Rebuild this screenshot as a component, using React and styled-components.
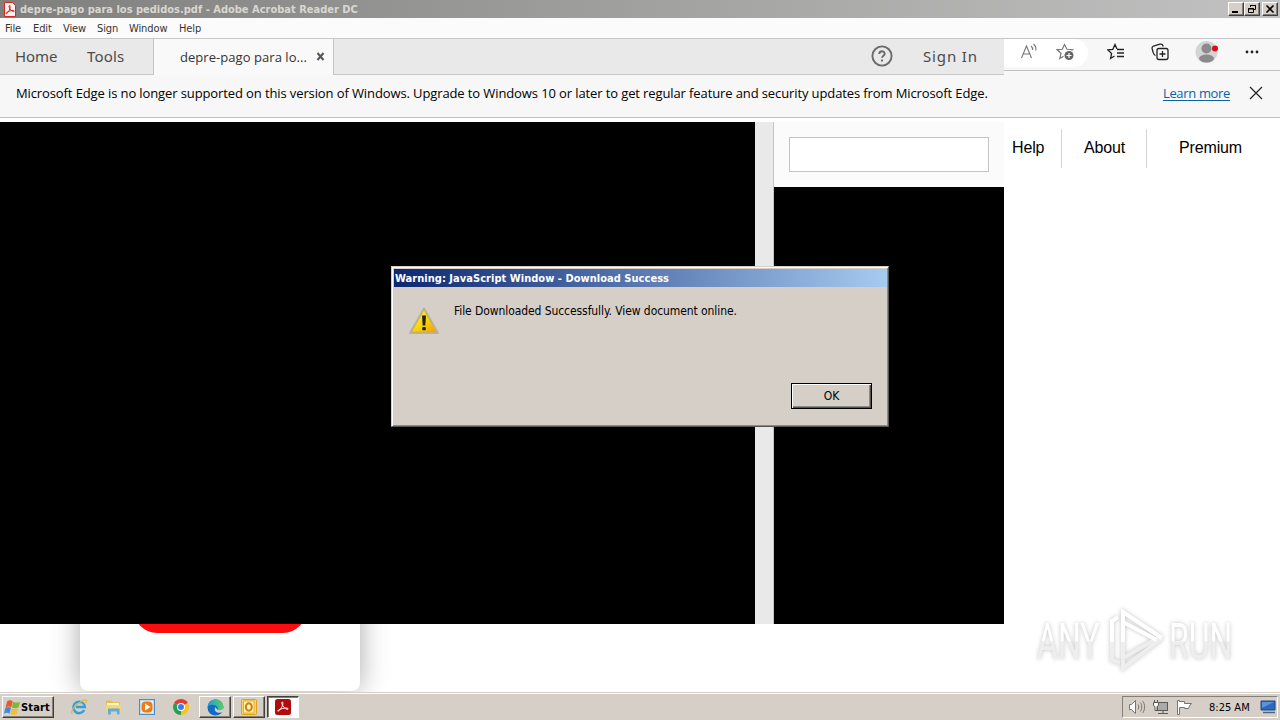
import styled, { createGlobalStyle, css } from "styled-components"

const GlobalStyle = createGlobalStyle`
    * {
        box-sizing: border-box;
    }
    body {
        margin: 0;
        overflow: hidden;
        background-color: #fff;
    }
`;

const tahoma = css`
    font-family: "DejaVu Sans Condensed", "DejaVu Sans", sans-serif;
    font-size: 11px;
`;
const segoe = css`
    font-family: "Open Sans", "Noto Sans", sans-serif;
    font-size: 13px;
`;
const raised = css`
    border: 1px solid;
    border-color: #fff #404040 #404040 #fff;
    box-shadow: inset -1px -1px #848079;
`;

const Desktop = styled.div`
    ${tahoma}
    position: relative;
    display: flex;
    flex-direction: column;
    width: 1280px;
    height: 720px;
    overflow: hidden;
    white-space: nowrap;
    color: #000;
`;

/* acrobat window */
const TitleBar = styled.header`
    display: flex;
    align-items: center;
    height: 18px;
    padding: 0 2px 0 4px;
    background: linear-gradient(90deg, #7f7f7d, #c2c2c2);
`;
const Title = styled.h1`
    flex: 1;
    margin: 0 0 0 4px;
    padding-top: 1px;
    font-size: 11px;
    line-height: 17px;
    font-weight: bold;
    color: #dad7d0;
`;
const CaptionButton = styled.button`
    ${raised}
    display: flex;
    align-items: center;
    justify-content: center;
    width: 16px;
    height: 14px;
    margin-left: ${(props) => (props.$gap ? '2px' : '0')};
    padding: 0;
    background-color: #d6cfc8;
`;
const MenuBar = styled.nav`
    display: flex;
    gap: 12px;
    height: 20px;
    padding: 1px 5px 0;
    background-color: #fbfbfb;
    line-height: 19px;
    color: #333;
`;
const MenuItem = styled.span`
    width: ${(props) => props.$width}px;
    letter-spacing: -0.1px;
`;

const Toolbars = styled.div`
    display: flex;
    align-items: flex-start;
    height: 37px;
    background-color: #f7f7f7;
`;
const AcrobatBar = styled.div`
    display: flex;
    flex: none;
    width: 1004px;
    height: 37px;
    background-color: #e9e9e9;
    border-top: 1px solid #c8c8c8;
    border-bottom: 1px solid #c8c8c8;
    font-family: "Noto Sans", sans-serif;
    font-size: 15px;
    line-height: 34px;
    color: #4b4b4b;
`;
const BarLink = styled.span`
    width: ${(props) => props.$width}px;
    padding-left: ${(props) => props.$indent}px;
    letter-spacing: ${(props) => props.$track || 0}px;
`;
const DocumentTab = styled.div`
    ${segoe}
    display: flex;
    align-items: center;
    width: 181px;
    height: 37px;
    padding: 0 0 2px 26px;
    background-color: #f9f9f9;
    border-left: 1px solid #c4c4c4;
    border-right: 1px solid #c4c4c4;
    line-height: 34px;
    color: #333;
`;
const TabName = styled.span`
    width: 136px;
    letter-spacing: 0.05px;
`;
const BarSpace = styled.div`
    flex: 1;
`;
const HelpIcon = styled.svg`
    margin-top: 6px;
`;

/* edge window behind it */
const EdgeBar = styled.div`
    display: flex;
    flex: none;
    width: 276px;
    height: 33px;
    border-top: 1px solid #c6c6c6;
    border-bottom: 1px solid #c2c2c2;
`;
const AddressEnd = styled.div`
    display: flex;
    flex: none;
    align-items: center;
    gap: 18px;
    width: 84px;
    height: 28px;
    padding: 0 0 3px 16px;
    background-color: #fff;
    border-radius: 0 14px 14px 0;
`;
const EdgeActions = styled.div`
    display: flex;
    flex: none;
    align-items: center;
    height: 25px;
    padding-left: 17px;
`;
const EdgeAction = styled.span`
    display: flex;
    justify-content: center;
    width: ${(props) => props.$width}px;
`;
const Notice = styled.div`
    ${segoe}
    display: flex;
    align-items: center;
    height: 43px;
    padding: 0 17px 6px 16px;
    background-color: #f7f7f7;
    border-bottom: 1px solid #c0c0c0;
    line-height: 20px;
`;
const NoticeText = styled.span`
    flex: 1;
    letter-spacing: -0.11px;
`;
const NoticeLink = styled.a`
    margin-right: 19px;
    letter-spacing: -0.34px;
    color: #0b62a9;
    text-decoration: underline;
    text-underline-offset: 2px;
`;

const Content = styled.main`
    display: flex;
    height: 506px;
    padding-top: 4px;
`;
const DocumentView = styled.div`
    width: 755px;
    background-color: #000;
`;
const Gutter = styled.div`
    width: 19px;
    background-color: #e9e9e9;
    border-right: 1px solid #c4c4c4;
`;
const SidePane = styled.div`
    display: flex;
    flex-direction: column;
    width: 230px;
    background-color: #000;
`;
const SearchArea = styled.div`
    height: 65px;
    padding: 15px;
    background-color: #fbfbfb;
`;
const SearchBox = styled.div`
    width: 200px;
    height: 35px;
    background-color: #fff;
    border: 1px solid #c4c4c4;
`;
const SiteNav = styled.nav`
    display: flex;
    height: 39px;
    margin-top: 7px;
    font-family: "Liberation Sans", Arial, sans-serif;
    font-size: 16px;
    line-height: 37px;
`;
const SiteLink = styled.a`
    width: ${(props) => props.$width}px;
    padding-left: ${(props) => props.$indent}px;
    border-right: ${(props) => (props.$last ? 'none' : '1px solid #d4d4d4')};
    letter-spacing: -0.15px;
`;

const PageBottom = styled.section`
    height: 68px;
    padding-left: 80px;
    overflow: hidden;
`;
const Card = styled.div`
    display: flex;
    flex-direction: column;
    justify-content: flex-end;
    align-items: center;
    width: 280px;
    height: 200px;
    margin-top: -133px;
    padding-bottom: 58px;
    background-color: #fff;
    border-radius: 8px;
    box-shadow: 0 0 28px rgba(0, 0, 0, 0.34);
`;
const RedButton = styled.div`
    width: 172px;
    height: 46px;
    background-color: #fb0d0d;
    border-radius: 23px;
`;

/* dialog */
const Dialog = styled.div`
    position: absolute;
    left: 391px;
    top: 266px;
    width: 498px;
    height: 161px;
    padding: 2px 1px 0 2px;
    background-color: #d6cfc8;
    border: 1px solid;
    border-color: #d6cfc8 #555 #555 #d6cfc8;
    box-shadow: inset 1px 1px #fff, inset -1px -1px #8d8983;
`;
const DialogTitle = styled.h2`
    width: 493px;
    height: 18px;
    margin: 0;
    padding: 1px 0 0 1px;
    background: linear-gradient(90deg, #0d2870, #a6caf0);
    font-size: 11px;
    line-height: 17px;
    color: #fff;
    letter-spacing: 0.035px;
`;
const DialogBody = styled.div`
    display: flex;
    gap: 14px;
    height: 96px;
    padding: 18px 0 0 14px;
`;
const Message = styled.p`
    margin: -3px 0 0;
    font-size: 12px;
    line-height: 18px;
    letter-spacing: -0.08px;
`;
const OkButton = styled.button`
    ${tahoma}
    display: block;
    width: 81px;
    height: 26px;
    margin-left: 397px;
    padding: 0;
    background-color: #d6cfc8;
    border: 1px solid #000;
    box-shadow: inset 1px 1px #fff, inset -1px -1px #55524e, inset -2px -2px #8d8983;
    font-size: 12px;
    line-height: 22px;
`;

const Watermark = styled.div`
    position: absolute;
    left: 1037px;
    top: 608px;
    display: flex;
    align-items: center;
    height: 66px;
    filter: drop-shadow(0 0 2px rgba(0, 0, 0, 0.24));
`;
const Mark = styled.span`
    width: 100px;
    margin-right: -34px;
    padding-top: 2px;
    font-family: Roboto, sans-serif;
    font-size: 50px;
    line-height: 66px;
    transform: scaleX(0.64);
    transform-origin: 0 50%;
    background: linear-gradient(#fff 50%, #eee 51%);
    background-clip: text;
    color: transparent;
`;

/* taskbar */
const Taskbar = styled.footer`
    display: flex;
    height: 28px;
    padding: 3px 2px 0;
    background-color: #d6cfc8;
    border-top: 1px solid #d6cfc8;
    box-shadow: inset 0 1px #fff;
`;
const StartButton = styled.button`
    ${tahoma}
    ${raised}
    display: flex;
    align-items: center;
    gap: 0;
    width: 52px;
    height: 22px;
    margin-right: 8px;
    padding: 0 0 0 1px;
    background-color: #d6cfc8;
    font-weight: bold;
    letter-spacing: 0.15px;
`;
const Launcher = styled.span`
    display: flex;
    align-items: center;
    justify-content: center;
    width: 34px;
    height: 22px;
`;
const TaskButtons = styled.div`
    display: flex;
    gap: 2px;
    margin-left: 1px;
`;
const TaskButton = styled.button`
    ${raised}
    display: flex;
    align-items: center;
    justify-content: center;
    width: 32px;
    height: 22px;
    padding: 0;
    background-color: #d6cfc8;
    ${(props) => props.$active && css`
        background-color: #fff;
        border-color: #404040 #fff #fff #404040;
        box-shadow: inset 1px 1px #848079;
    `}
`;
const Tray = styled.div`
    display: flex;
    align-items: center;
    width: 156px;
    height: 22px;
    margin-left: auto;
    padding-left: 6px;
    border: 1px solid;
    border-color: #848079 #fff #fff #848079;
`;
const TrayIcon = styled.span`
    display: flex;
    width: 24px;
`;
const Clock = styled.time`
    width: 51px;
    margin-left: 8px;
`;

const PdfIcon = () => (
    <svg width="12" height="15" viewBox="0 0 12 15">
        <path d="M.5.5h8l3 3v11H.5z" fill="#fff3ef" stroke="#cf2a24" />
        <path d="M2.300 11.800c2.300-1 4.300-5.500 3.700-8-.3-1-1.300-.3-1 .7.500 2.500 2.500 4.700 4.700 5 .8 0 .6-.9-.3-1-2.300-.2-5 .9-6.800 2-.7.500-.7 1.500-.3 1.300z" fill="none" stroke="#d5231c" />
    </svg>
)

const WarningIcon = () => (
    <svg width="32" height="32" viewBox="0 0 32 32">
        <defs>
            <linearGradient id="warn" x1="0" y1="0" x2="1" y2="1">
                <stop offset="0" stopColor="#fff36a" />
                <stop offset=".5" stopColor="#f9d80b" />
                <stop offset="1" stopColor="#f39a10" />
            </linearGradient>
        </defs>
        <path d="M16 3.500L2 28h28z" fill="#eee" stroke="#b4b2ac" strokeWidth="2" strokeLinejoin="round" />
        <path d="M16 5L3.700 27h24.600z" fill="url(#warn)" stroke="#e0b00c" strokeWidth=".8" strokeLinejoin="round" />
        <path d="M14 10.500h4l-.7 10h-2.600z" fill="#222" />
        <rect x="14.200" y="22" width="3.600" height="3.300" rx="1" fill="#222" />
    </svg>
)

const StartIcon = () => (
    <svg width="17" height="17" viewBox="0 0 16 16">
        <path d="M3 2c2-1.300 3.500-1 5.300 0L6.800 7.700c-1.500-1-3-1-5.300 0z" fill="#e8592b" />
        <path d="M8.700 2.500c2 1.200 4 1 6.500 0l-1.500 5.500c-2 1-4.300 1-6.400 0z" fill="#7db83a" />
        <path d="M1.300 8.300c2-1 3.700-1 5.300 0l-1.400 5.500c-1.500-1-3-1.200-5.200 0z" fill="#3e8ddd" />
        <path d="M7.200 8.700c2 1.200 4.300 1 6.300 0L12 14.200c-2 1-4 1-6 0z" fill="#f8bd2c" />
    </svg>
)

const IeIcon = () => (
    <svg width="18" height="18" viewBox="0 0 18 18" fill="none">
        <path d="M14.200 12a5.700 5.700 0 1 1 .6-3H6" stroke="#319fdd" strokeWidth="2.500" />
        <path d="M4.300 8.500c1-3.600 7-4.700 9.500-1" stroke="#80cdf3" strokeWidth="1" />
        <path d="M2.300 16C-.5 14 6 6 12 3c4-2 5.500-1 4 2" stroke="#e4b838" strokeWidth="1.200" />
    </svg>
)

const FolderIcon = () => (
    <svg width="17" height="16" viewBox="0 0 17 16">
        <path d="M1 1.500h6L8 3h7v9H1z" fill="#e2bf5a" />
        <path d="M2 4h12v7H2z" fill="#fff5bd" />
        <path d="M1 6h15v6.500H1z" fill="#f3d77c" />
        <path d="M3 15.500V9.500h11.500v6H12v-3H5.800v3z" fill="#5fabd9" />
    </svg>
)

const MediaIcon = () => (
    <svg width="16" height="16" viewBox="0 0 16 16">
        <rect x=".5" y=".5" width="15" height="15" fill="#b9dcf5" stroke="#4d8fc5" />
        <rect x="2" y="2" width="12" height="12" fill="#e4f2fb" />
        <rect x="2.500" y="2.500" width="11" height="11" rx="4" fill="#f17b10" />
        <path d="M6 4.500v7L11.500 8z" fill="#fff" />
    </svg>
)

const ChromeIcon = () => (
    <svg width="16" height="16" viewBox="0 0 16 16">
        <path d="M8 8L1.100 4A8 8 0 0 1 14.900 4z" fill="#df3f32" />
        <path d="M8 8L14.900 4A8 8 0 0 1 8 16z" fill="#fbc414" />
        <path d="M8 8v8A8 8 0 0 1 1.100 4z" fill="#2a9d4e" />
        <circle cx="8" cy="8" r="4" fill="#fff" />
        <circle cx="8" cy="8" r="3" fill="#3c7ded" />
    </svg>
)

const EdgeIcon = () => (
    <svg width="17" height="17" viewBox="0 0 17 17">
        <defs>
            <linearGradient id="edge" x1="0" y1="0" x2="1" y2="0">
                <stop offset="0" stopColor="#239bd8" />
                <stop offset="1" stopColor="#58cf62" />
            </linearGradient>
        </defs>
        <circle cx="8.500" cy="8.500" r="8" fill="#136cc3" />
        <path d="M.5 8.500a8 8 0 0 1 16-.5c0 3-3.500 4-6 3 .8-1 .7-3.500-2-4.500C5 5 1 6 .5 8.500z" fill="url(#edge)" />
        <path d="M8.500 8.200c-1.500 1.300-1 5.500 3.500 5.500 2 0 3.300-.7 5-1.500L16.500 9c-1.500 2.500-4.500 2.500-6 1.800z" fill="#d6cfc8" />
    </svg>
)

const OutlookIcon = () => (
    <svg width="16" height="16" viewBox="0 0 16 16">
        <rect x=".5" y=".5" width="15" height="15" rx="1" fill="#f9d565" stroke="#dda21b" />
        <rect x="2.500" y="2" width="10.500" height="12" fill="#fff1b5" stroke="#e5af2c" />
        <ellipse cx="7.800" cy="8" rx="3" ry="3.700" fill="none" stroke="#c98511" strokeWidth="2" />
    </svg>
)

const AcrobatIcon = () => (
    <svg width="16" height="16" viewBox="0 0 16 16">
        <rect width="16" height="16" rx="2.500" fill="#b30b0b" />
        <path d="M3 12.200c2.200-.8 5.500-6 4.800-8.700-.3-1-1.300-.5-1 .7C7.300 7 10 10 12.500 10.400c1.200 0 .8-1.200-.5-1.300-3-.2-6 .6-8.500 2-.8.5-.9 1.200-.5 1.100z" fill="none" stroke="#fff" strokeWidth="1" />
    </svg>
)

const pinned = [IeIcon, FolderIcon, MediaIcon, ChromeIcon];
const menus = [["File", 16], ["Edit", 18], ["View", 22], ["Sign", 20], ["Window", 38], ["Help", 22]];

const App = () => {
    return (
        <Desktop>
            <GlobalStyle />
            <TitleBar>
                <PdfIcon />
                <Title>depre-pago para los pedidos.pdf - Adobe Acrobat Reader DC</Title>
                <CaptionButton>
                    <svg width="10" height="10"><path d="M1 8h6" stroke="#000" strokeWidth="2" /></svg>
                </CaptionButton>
                <CaptionButton>
                    <svg width="10" height="10" fill="none" stroke="#000"><path d="M3.500 3V1.500h5v4H7M3 1.500h6M1.500 4.500h5v4h-5zM1 5h6" /></svg>
                </CaptionButton>
                <CaptionButton $gap>
                    <svg width="10" height="10"><path d="M1.500 1.500l7 7m0-7l-7 7" stroke="#000" strokeWidth="1.600" /></svg>
                </CaptionButton>
            </TitleBar>
            <MenuBar>
                {menus.map(([name, width]) => <MenuItem key={name} $width={width}>{name}</MenuItem>)}
            </MenuBar>

            <Toolbars>
                <AcrobatBar>
                    <BarLink $width={72} $indent={15} $track={-0.05}>Home</BarLink>
                    <BarLink $width={81} $indent={15} $track={0.2}>Tools</BarLink>
                    <DocumentTab>
                        <TabName>depre-pago para lo...</TabName>
                        <svg width="9" height="9"><path d="M1.500 1l6 7m0-7l-6 7" stroke="#555" strokeWidth="2" /></svg>
                    </DocumentTab>
                    <BarSpace />
                    <HelpIcon width="22" height="22" viewBox="0 0 22 22" fill="none" stroke="#6a6a6a" strokeWidth="1.900">
                        <circle cx="11" cy="11" r="9.600" />
                        <path d="M8.300 9c0-3.600 5.500-3.500 5.400-.3 0 2-2.700 2-2.700 4.100M11 14.500v2" />
                    </HelpIcon>
                    <BarLink $width={111} $indent={30} $track={0.85}>Sign In</BarLink>
                </AcrobatBar>
                <EdgeBar>
                    <AddressEnd>
                        <svg width="18" height="18" viewBox="0 0 18 18" fill="none" stroke="#777" strokeWidth="1.100">
                            <path d="M1.500 15L6.500 3l5 12M3.300 11h6.400M11 3c1.300 1 1.800 2.500 1.500 4M13.500 1c2 1.700 2.800 4 2.300 6.500" />
                        </svg>
                        <svg width="19" height="18" viewBox="0 0 19 18" fill="none" stroke="#777" strokeWidth="1.200">
                            <path d="M15.500 7.500l1-.8-5.500-.4-2.500-4.800-2.200 4.800-5.300.5 4 3.500-1.200 5.200 3.700-2.200" />
                            <circle cx="13" cy="12.500" r="4.500" fill="#666" stroke="none" />
                            <path d="M13 10v5m-2.500-2.500h5" stroke="#fff" />
                        </svg>
                    </AddressEnd>
                    <EdgeActions>
                        <EdgeAction $width={22}>
                            <svg width="18" height="18" viewBox="0 0 18 18" fill="none" stroke="#222" strokeWidth="1.300">
                                <path d="M10 6L8 1.500 5.800 6.300l-5 .6 3.800 3.500-1 5.100L7.500 13M10 6.500h7M10 10h7M10 13.500h7" />
                            </svg>
                        </EdgeAction>
                        <EdgeAction $width={66}>
                            <svg width="18" height="18" viewBox="0 0 18 18" fill="none" stroke="#222" strokeWidth="1.300">
                                <path d="M4.500 12.500C3 12 2.800 11.300 2.200 9.500L1.200 6C.8 4.300 1 3.500 2.500 3L9 1.200c1.500-.4 2.500 0 3 1.500l.2.800" />
                                <rect x="6" y="5.500" width="11" height="11" rx="2" />
                                <path d="M11.500 8v6m-3-3h6" />
                            </svg>
                        </EdgeAction>
                        <EdgeAction $width={28}>
                            <svg width="24" height="24" viewBox="0 0 24 24">
                                <circle cx="11.500" cy="12" r="11" fill="#d4d4d4" />
                                <circle cx="11.500" cy="8.500" r="5" fill="#8b8b8b" />
                                <ellipse cx="11.500" cy="18.500" rx="7.500" ry="4" fill="#8b8b8b" />
                                <circle cx="20" cy="8.500" r="3" fill="#d80d1c" />
                            </svg>
                        </EdgeAction>
                        <EdgeAction $width={62}>
                            <svg width="14" height="4" fill="#222"><circle cx="2" cy="2" r="1.400" /><circle cx="7" cy="2" r="1.400" /><circle cx="12" cy="2" r="1.400" /></svg>
                        </EdgeAction>
                    </EdgeActions>
                </EdgeBar>
            </Toolbars>

            <Notice>
                <NoticeText>Microsoft Edge is no longer supported on this version of Windows. Upgrade to Windows 10 or later to get regular feature and security updates from Microsoft Edge.</NoticeText>
                <NoticeLink>Learn more</NoticeLink>
                <svg width="14" height="14"><path d="M1 1l12 12m0-12L1 13" stroke="#222" strokeWidth="1.200" /></svg>
            </Notice>

            <Content>
                <DocumentView />
                <Gutter />
                <SidePane>
                    <SearchArea>
                        <SearchBox />
                    </SearchArea>
                </SidePane>
                <SiteNav>
                    <SiteLink $width={58} $indent={8}>Help</SiteLink>
                    <SiteLink $width={85} $indent={22}>About</SiteLink>
                    <SiteLink $width={120} $indent={32} $last>Premium</SiteLink>
                </SiteNav>
            </Content>
            <PageBottom>
                <Card>
                    <RedButton />
                </Card>
            </PageBottom>

            <Taskbar>
                <StartButton><StartIcon />Start</StartButton>
                {pinned.map((Icon, i) => <Launcher key={i}><Icon /></Launcher>)}
                <TaskButtons>
                    <TaskButton><EdgeIcon /></TaskButton>
                    <TaskButton><OutlookIcon /></TaskButton>
                    <TaskButton $active><AcrobatIcon /></TaskButton>
                </TaskButtons>
                <Tray>
                    <TrayIcon>
                        <svg width="17" height="16" viewBox="0 0 17 16" fill="none" stroke="#77736e">
                            <path d="M.5 5.500v5h2l4 4V1.500l-4 4z" fill="#fff" />
                            <path d="M9 5.500c1 1.500 1 3.500 0 5M11.300 3.500c2 2.500 2 6.500 0 9M13.600 2c2.700 3.500 2.700 8.500 0 12" />
                        </svg>
                    </TrayIcon>
                    <TrayIcon>
                        <svg width="17" height="16" viewBox="0 0 17 16" fill="none" stroke="#5d5a56">
                            <rect x="4.500" y="3.500" width="10" height="8" fill="#aaa" />
                            <path d="M5 14.500h10M10 12v2" />
                            <path d="M.5 3.500h5v3l-1.500 1v4H2V7.500L.5 6.500zM1.500 1v2.500M4.500 1v2.500" fill="#fff" />
                        </svg>
                    </TrayIcon>
                    <TrayIcon>
                        <svg width="17" height="16" viewBox="0 0 17 16" fill="#fff" stroke="#77736e">
                            <path d="M.5 15.500v-14h2v1h5v2h7l-2 2.500-1 2.500h-4v-1h-5v7z" />
                        </svg>
                    </TrayIcon>
                    <Clock>8:25 AM</Clock>
                    <svg width="17" height="14" viewBox="0 0 17 14">
                        <path d="M1 1h14v9H1z" fill="#2e68bd" stroke="#174886" />
                        <path d="M2 2h12L2 8z" fill="#5a93da" />
                        <path d="M3 12.500h12" stroke="#4b6484" strokeWidth="1.500" />
                    </svg>
                </Tray>
            </Taskbar>

            <Watermark>
                <Mark>ANY</Mark>
                <svg width="66" height="66" viewBox="0 0 66 66" fill="none" strokeWidth="4">
                    <path d="M9 34v18l8 3" stroke="#eee" />
                    <path d="M9 34V13l6-4" stroke="#fff" />
                    <path d="M20 33v17l35-20" stroke="#eee" />
                    <path d="M59 30L20 60v-8" stroke="#eee" />
                    <path d="M20 34V14l34 18M20 14V4l39 26" stroke="#fff" />
                </svg>
                <Mark>RUN</Mark>
            </Watermark>

            <Dialog>
                <DialogTitle>Warning: JavaScript Window - Download Success</DialogTitle>
                <DialogBody>
                    <WarningIcon />
                    <Message>File Downloaded Successfully. View document online.</Message>
                </DialogBody>
                <OkButton>OK</OkButton>
            </Dialog>
        </Desktop>
    )
}

export default App;
